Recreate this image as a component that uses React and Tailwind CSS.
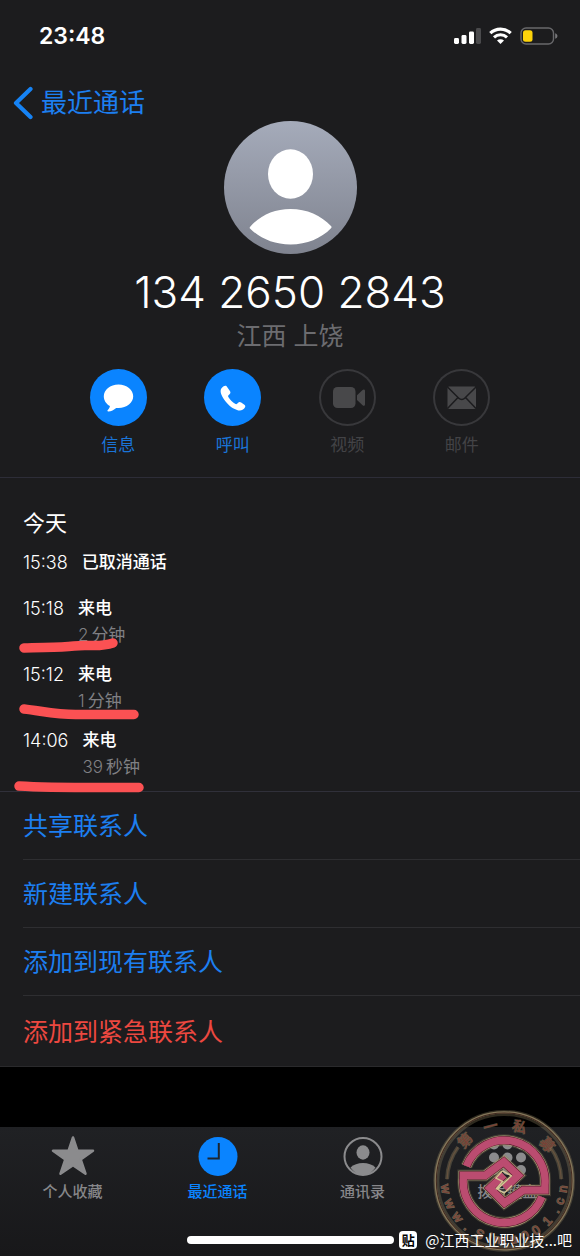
import React, { useState } from "react";

const actions = [
  { id: "message", label: "信息", enabled: true },
  { id: "call", label: "呼叫", enabled: true },
  { id: "video", label: "视频", enabled: false },
  { id: "mail", label: "邮件", enabled: false },
];

const calls = [
  { time: "15:38", label: "已取消通话" },
  { time: "15:18", label: "来电", amount: "2", unit: "分钟" },
  { time: "15:12", label: "来电", amount: "1", unit: "分钟" },
  { time: "14:06", label: "来电", amount: "39", unit: "秒钟" },
];

const options = [
  { label: "共享联系人" },
  { label: "新建联系人" },
  { label: "添加到现有联系人" },
  { label: "添加到紧急联系人", danger: true },
];

const tabs = [
  { id: "favorites", label: "个人收藏" },
  { id: "recents", label: "最近通话" },
  { id: "contacts", label: "通讯录" },
  { id: "keypad", label: "拨号键盘" },
];

function StatusBar() {
  return (
    <div className="flex h-[72px] items-center justify-between pr-[22px] pl-[39px]">
      <span className="text-[23px] font-semibold text-white">23:48</span>
      <div className="flex items-center gap-2">
        <svg width="27" height="18" viewBox="0 0 27 18" fill="#fff">
          <rect x="0" y="11" width="5" height="6" rx="1.4" />
          <rect x="7.5" y="8" width="5" height="9" rx="1.4" />
          <rect x="15" y="4.5" width="5" height="12.5" rx="1.4" />
          <rect x="22" y="1" width="5" height="16" rx="1.4" fill="#4a4a4c" />
        </svg>
        <svg width="23" height="18" viewBox="0 0 23 18" fill="none" stroke="#fff">
          <path d="M1.3 6.2a14.7 14.7 0 0 1 20.4 0" strokeWidth="3.2" />
          <path d="M5 10.3a9.4 9.4 0 0 1 13 0" strokeWidth="3" />
          <path d="M11.5 17 8 13.6a5 5 0 0 1 7 0z" fill="#fff" stroke="none" />
        </svg>
        <svg width="38" height="18" viewBox="0 0 38 18">
          <rect x="1" y="1" width="32.5" height="16" rx="5" fill="none" stroke="#68686b" strokeWidth="1.4" />
          <rect x="3" y="3.2" width="9.5" height="11.6" rx="2.5" fill="#fdd30a" />
          <path d="M35.2 6.2c3 1 3 4.6 0 5.6z" fill="#77777a" />
        </svg>
      </div>
    </div>
  );
}

function ActionIcon({ id }) {
  if (id === "message") {
    return (
      <svg width="57" height="57" viewBox="0 0 57 57" fill="#fff">
        <path d="M28.5 15.5c8.3 0 14.7 5.2 14.7 11.8S36.8 39 28.5 39c-.8 0-1.6 0-2.3-.1-2.2 2-5 3.3-7.8 3.5-1 .1-1.3-.8-.6-1.4 1.3-1.2 2-2.5 2.1-3.9-3.8-2.1-6.1-5.7-6.1-9.8 0-6.6 6.4-11.8 14.7-11.8z" />
      </svg>
    );
  }
  if (id === "call") {
    return (
      <svg width="57" height="57" viewBox="0 0 57 57" fill="#fff">
        <path d="M17.3 19.5c1.5-2.2 4-3.6 5.3-2.3l3.3 4.9c1 1.5.5 2.6-.6 3.5-1.3 1.1-1.5 1.5-.8 2.7 1.8 2.8 4 5 6.6 6.5 1.2.7 1.8.4 2.8-.8.9-1.1 2-1.4 3.3-.5l3.2 2.3c1.2.9 1.2 2 .2 3.3-1.5 2-3.6 2.9-6.3 2.3-4.8-1-9.3-4.5-12.7-8.8-3.5-4.6-6.3-9.7-4.3-13.1z" />
      </svg>
    );
  }
  if (id === "video") {
    return (
      <svg width="57" height="57" viewBox="0 0 57 57" fill="#48484a">
        <rect x="14" y="18" width="22.5" height="21" rx="4.5" />
        <path d="m38 26.3 5.6-5.4c1-1 2.4-.5 2.4.9v13.6c0 1.4-1.4 1.9-2.4.9L38 30.9z" />
      </svg>
    );
  }
  return (
    <svg width="57" height="57" viewBox="0 0 57 57">
      <rect x="14.5" y="17.5" width="28.5" height="22.5" rx="1.5" fill="#48484a" />
      <path
        d="m14.5 18 11.3 11.3c1.6 1.6 4.3 1.6 5.9 0L43 18M14.5 39.5l10-10.5M43 39.5 33 29"
        fill="none"
        stroke="#1c1c1e"
        strokeWidth="1.5"
      />
    </svg>
  );
}

function TabIcon({ id }) {
  if (id === "favorites") {
    return (
      <svg width="44" height="44" viewBox="0 0 44 44" fill="#8b8b8d" stroke="#8b8b8d" strokeWidth="2.5" strokeLinejoin="round">
        <path d="m22 3.5 4.5 13.3H42L29.7 25.5l4.8 14.2L22 31.2 9.5 39.7l4.8-14.2L2 16.8h15.5z" />
      </svg>
    );
  }
  if (id === "recents") {
    return (
      <svg width="44" height="44" viewBox="0 0 44 44">
        <circle cx="22" cy="22.5" r="19.5" fill="#0a84ff" />
        <path d="M22.8 9v15.5H11.5" fill="none" stroke="#1c2530" strokeWidth="2" />
      </svg>
    );
  }
  if (id === "contacts") {
    return (
      <svg width="44" height="44" viewBox="0 0 44 44" fill="#8b8b8d">
        <circle cx="22" cy="22.5" r="18.5" fill="none" stroke="#8b8b8d" strokeWidth="2" />
        <ellipse cx="22" cy="18.5" rx="6.5" ry="7.2" />
        <path d="M9.5 33.5c3-3 7.5-4.5 12.5-4.5s9.5 1.5 12.5 4.5C31.5 38 27 41 22 41S12.5 38 9.5 33.5z" />
      </svg>
    );
  }
  return (
    <svg width="44" height="44" viewBox="0 0 44 44" fill="#8b8b8d">
      {[10.5, 23.5, 36].map((y) =>
        [8, 21.5, 35].map((x) => <circle key={`${x}-${y}`} cx={x} cy={y} r="5" />)
      )}
    </svg>
  );
}

const sealLetters = [
  ["第", -44], ["一", -14], ["私", 16], ["募", 50],
];
const sealUrl = [
  ["w", 262], ["w", 247], ["w", 232], [".", 219], ["S", 205], ["i", 194], ["m", 185],
  ["u", 171], ["0", 159], ["0", 147], ["1", 133], [".", 120], ["c", 110], ["n", 98],
];

const hooks = [
  "M138 226A122 122 0 0 1 373 282V298H308L252 336 208 292 250 252",
  "M364 318A122 122 0 0 1 129 262V254H194L250 213 293 254 252 292",
];

function Seal() {
  return (
    <svg viewBox="38 55 428 428" className="w-[143px]" aria-hidden="true">
      <g fill="none">
        <circle cx="251" cy="270" r="203" stroke="#9b8c68" strokeOpacity=".3" strokeWidth="18" />
        <circle cx="251" cy="270" r="205" stroke="#84775a" strokeWidth="7" />
        <circle cx="251" cy="270" r="203" stroke="#40281f" strokeWidth="3" />
        <path d="M80 265A171 171 0 0 1 113 169M389 169A171 171 0 0 1 422 265" stroke="#9b8c68" strokeOpacity=".35" strokeWidth="12" />
        <path d="M80 265A171 171 0 0 1 113 169M389 169A171 171 0 0 1 422 265" stroke="#66523e" strokeWidth="4" />
      </g>
      <g fill="none" strokeMiterlimit="10">
        {hooks.map((d) => (
          <path key={d} d={d} stroke="#8c7d59" strokeOpacity=".3" strokeWidth="36" />
        ))}
        {hooks.map((d) => (
          <g key={d}>
            <path d={d} stroke="#b5a57b" strokeWidth="29" />
            <path d={d} stroke="#571d2e" strokeWidth="26" />
            <path d={d} stroke="#bb4c70" strokeWidth="22" />
          </g>
        ))}
        <path d="m246 240 27 15-42 40 20 12 23-23M246 240l-20 22 20 10-20 23" stroke="#d6c795" strokeWidth="4" />
      </g>
      <g
        fill="#7b4136"
        stroke="#9c8c66"
        strokeOpacity=".5"
        strokeWidth="4"
        paintOrder="stroke"
        textAnchor="middle"
        fontFamily="'Noto Sans CJK SC', sans-serif"
        fontSize="42"
      >
        {sealLetters.map(([char, angle]) => (
          <text key={char} x="251" y="117" transform={`rotate(${angle} 251 270)`}>
            {char}
          </text>
        ))}
      </g>
      <g
        fill="#7b4136"
        stroke="#a09270"
        strokeOpacity=".6"
        strokeWidth="4"
        paintOrder="stroke"
        textAnchor="middle"
        fontFamily="'Liberation Sans', sans-serif"
        fontSize="38"
      >
        {sealUrl.map(([char, angle]) => (
          <text key={angle} x="251" y="459" transform={`rotate(${angle - 180} 251 270)`}>
            {char}
          </text>
        ))}
      </g>
    </svg>
  );
}

function App() {
  const [activeTab, setActiveTab] = useState("recents");

  return (
    <div className="relative flex min-h-screen flex-col overflow-hidden bg-black font-['Inter','Noto_Sans_CJK_SC',sans-serif] text-white">
      <main className="border-b border-[#2a2a2c] bg-[#1c1c1e]">
        <StatusBar />

        {/* Contact header */}
        <header className="border-b border-[#2d2d38] pb-5">
          <button className="flex h-[49px] items-center gap-2 pt-3 pl-3 text-[26px] text-[#1c7ff0]">
            <svg width="21" height="34" viewBox="0 0 21 34" fill="none" stroke="#1683f5" strokeWidth="4.2" strokeLinecap="round" strokeLinejoin="round">
              <path d="M18.5 3 4 17l14.5 14" />
            </svg>
            最近通话
          </button>
          <div className="flex flex-col items-center">
            <svg width="133" height="133" viewBox="0 0 133 133">
              <defs>
                <linearGradient id="avatar" x1="0" y1="0" x2="0" y2="1">
                  <stop offset="0" stopColor="#a5abba" />
                  <stop offset="1" stopColor="#7f838f" />
                </linearGradient>
              </defs>
              <circle cx="66.5" cy="66.5" r="66.5" fill="url(#avatar)" />
              <ellipse cx="66.5" cy="53" rx="22.5" ry="24.7" fill="#fff" />
              <path d="M26 106C36 94.5 50 88 66.5 88S97 94.5 107 105c.7.8.7 1.5 0 2.3C97 117.5 83 123.5 66.5 123.5S36 117.5 26 107.5c-.5-.5-.5-1 0-1.5z" fill="#fff" />
            </svg>
            <h1 className="mt-3 text-[44px] leading-[52px] font-light">134 2650 2843</h1>
            <p className="text-[25px] leading-9 text-[#6c6c70]">江西 上饶</p>
          </div>
          <div className="mt-[15px] grid grid-cols-4 px-[61px]">
            {actions.map((action) => (
              <button
                key={action.id}
                disabled={!action.enabled}
                className={`flex flex-col items-center gap-[7px] text-[17px] leading-6 ${
                  action.enabled ? "text-[#1a74d8]" : "text-[#434346]"
                }`}
              >
                <span
                  className={`flex size-[57px] items-center justify-center rounded-full ${
                    action.enabled ? "bg-[#0a84ff]" : "ring-2 ring-[#38383b] ring-inset"
                  }`}
                >
                  <ActionIcon id={action.id} />
                </span>
                {action.label}
              </button>
            ))}
          </div>
        </header>

        {/* Call history */}
        <section className="relative border-b border-[#30303a] px-[23px] pt-[29px] pb-[10px]">
          <h2 className="text-[22px] leading-8">今天</h2>
          <ul className="mt-[10px]">
            {calls.map((call) => (
              <li
                key={call.time}
                className="grid grid-cols-[auto_1fr] gap-x-[14px] text-[17px] leading-[27px] not-first:mt-3 first:mb-[19px]"
              >
                <time className="text-[18px] font-light">{call.time}</time>
                <span className="font-medium">{call.label}</span>
                {call.amount && (
                  <span className="col-start-2 flex gap-[3px] text-[#808084]">
                    <span className="font-light">{call.amount}</span>
                    <span>{call.unit}</span>
                  </span>
                )}
              </li>
            ))}
          </ul>
          <svg
            width="160"
            height="170"
            viewBox="0 0 160 170"
            className="absolute -bottom-1 left-0"
            fill="none"
            stroke="#fb5153"
            strokeWidth="9.5"
            strokeLinecap="round"
            strokeLinejoin="round"
          >
            <path d="M24 23C40 22 58 23 74 21S98 23 113 18" />
            <path d="M24 84C42 86 58 90 78 89.5H134" />
            <path d="M19 161C50 163 80 162.5 139 162.5" />
          </svg>
        </section>

        {/* Contact options */}
        <ul className="pl-[23px]">
          {options.map((option) => (
            <li key={option.label} className="h-[68px] border-b border-[#2e2e31] last:h-[70px] last:border-b-0">
              <button
                className={`flex h-full w-full items-center pt-[3px] text-[25px] ${
                  option.danger ? "text-[#ec4840]" : "text-[#1c7ff0]"
                }`}
              >
                {option.label}
              </button>
            </li>
          ))}
        </ul>
      </main>

      <div className="min-h-[60px] flex-1" />

      {/* Tab bar */}
      <footer className="bg-linear-to-b from-[#202124] to-[#18181a]">
        <nav className="grid grid-cols-4 pt-[7px]">
          {tabs.map((tab) => (
            <button
              key={tab.id}
              onClick={() => setActiveTab(tab.id)}
              className={`flex flex-col items-center gap-[2px] text-[15px] leading-6 font-medium ${
                activeTab === tab.id ? "text-[#0a84ff]" : "text-[#87878a]"
              }`}
            >
              <TabIcon id={tab.id} />
              {tab.label}
            </button>
          ))}
        </nav>
        <div className="mx-auto mt-8 mb-3 h-2 w-[207px] rounded-full bg-white" />
      </footer>

      <div className="absolute right-1 bottom-1">
        <Seal />
      </div>
      <div className="absolute right-2 bottom-1 flex items-center gap-2 font-['Noto_Sans_CJK_SC',sans-serif] text-[15px] leading-6">
        <span className="flex size-[18px] items-center justify-center rounded bg-white text-[13px] font-bold text-black">
          贴
        </span>
        <span>@江西工业职业技...吧</span>
      </div>
    </div>
  );
}

export default App;
